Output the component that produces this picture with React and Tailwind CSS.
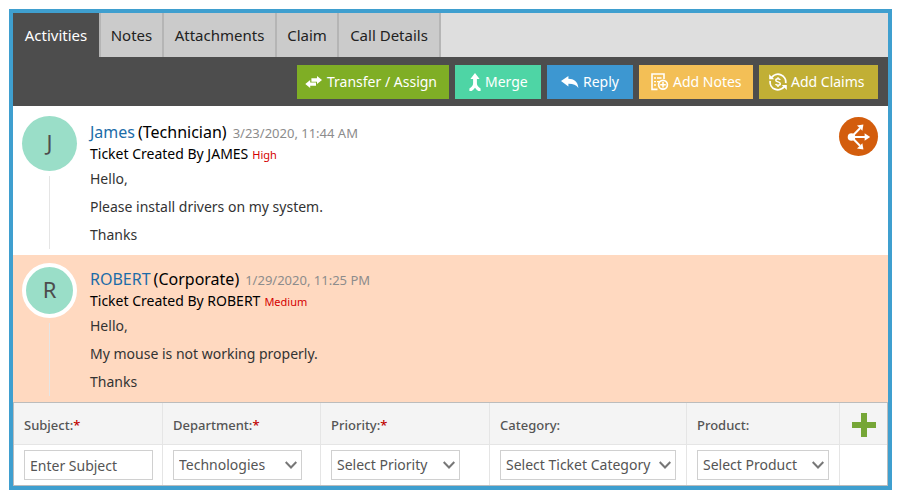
const tabs = [
  { label: 'Activities', width: 'w-[86px]' },
  { label: 'Notes', width: 'w-[63px]' },
  { label: 'Attachments', width: 'w-[113px]' },
  { label: 'Claim', width: 'w-[62px]' },
  { label: 'Call Details', width: 'w-[104px]' },
];

const tickets = [
  {
    name: 'James',
    role: '(Technician)',
    date: '3/23/2020, 11:44 AM',
    created: 'Ticket Created By JAMES',
    priority: 'High',
    message: 'Please install drivers on my system.',
  },
  {
    name: 'ROBERT',
    role: '(Corporate)',
    date: '1/29/2020, 11:25 PM',
    created: 'Ticket Created By ROBERT',
    priority: 'Medium',
    message: 'My mouse is not working properly.',
    highlighted: true,
  },
];

const columns = [
  { id: 'subject', label: 'Subject:', required: true, col: 'w-[149px]', field: 'w-[129px]', text: 'Enter Subject', input: true },
  { id: 'department', label: 'Department:', required: true, col: 'w-[158px]', field: 'w-[129px]', text: 'Technologies' },
  { id: 'priority', label: 'Priority:', required: true, col: 'w-[169px]', field: 'w-[129px]', text: 'Select Priority' },
  { id: 'category', label: 'Category:', col: 'w-[197px]', field: 'w-[176px]', text: 'Select Ticket Category' },
  { id: 'product', label: 'Product:', col: 'w-[153px]', field: 'w-[132px]', text: 'Select Product' },
];

function TransferIcon() {
  return (
    <svg className="h-3 w-[18px] shrink-0" viewBox="0 0 18 12" fill="currentColor" aria-hidden="true">
      <path d="M12 0L17 4L12 8V5.8H6.4V2.2H12Z" />
      <path d="M5.2 4L0.3 8L5.2 12V9.8H11V6.6H5.2Z" />
    </svg>
  );
}

function MergeIcon() {
  return (
    <svg className="h-[18px] w-3 shrink-0" viewBox="0 0 12 18" fill="currentColor" aria-hidden="true">
      <path d="M6 0L10.6 6H7.9V10.2C7.9 12.4 9 13.9 11.6 15.4V18H9.4C7.8 17 6.8 16 6 14.8C5.2 16 4.2 17 2.6 18H0.4V15.4C3 13.9 4.1 12.4 4.1 10.2V6H1.4Z" />
    </svg>
  );
}

function ReplyIcon() {
  return (
    <svg className="h-3 w-[18px] shrink-0" viewBox="0 0 18 12" fill="currentColor" aria-hidden="true">
      <path d="M0 5L7.4 0V2.8C13 2.9 16.8 5.6 17.4 12C15.2 8.8 12 7.6 7.4 7.7V10.4Z" />
    </svg>
  );
}

function NotesIcon() {
  return (
    <svg className="h-[18px] w-[18px] shrink-0" viewBox="0 0 18 18" fill="none" stroke="currentColor" aria-hidden="true">
      <path d="M13 6V1H1V16.4H6.5" strokeWidth="1.6" />
      <path d="M3 5H5M6 5H10.5M3 8.6H5M6 8.6H8.5M3 12H5" strokeWidth="1.3" />
      <circle cx="12" cy="11.8" r="4.4" strokeWidth="1.7" />
      <path d="M12 9V14.6M9.2 11.8H14.8" strokeWidth="1.5" />
    </svg>
  );
}

function ClaimsIcon() {
  return (
    <svg className="h-[18px] w-[18px] shrink-0" viewBox="0 0 18 18" fill="none" stroke="currentColor" aria-hidden="true">
      <path d="M2.6 4.6A7.8 7.8 0 0 1 16.7 10.2M15.2 13.6A7.8 7.8 0 0 1 1.2 7.8" strokeWidth="1.8" />
      <path d="M0.2 1.2V6.2H5.2ZM17.8 17V12H12.8Z" fill="currentColor" stroke="none" />
      <path d="M11.2 6.9C10.9 6.1 10.1 5.8 9 5.8C7.6 5.8 6.8 6.4 6.8 7.2C6.8 9.4 11.3 8.4 11.3 10.8C11.3 11.8 10.4 12.3 9 12.3C7.8 12.3 6.9 11.9 6.6 11M9 4.2V6M9 12.2V13.9" strokeWidth="1.5" />
    </svg>
  );
}

function ShareIcon() {
  return (
    <svg className="h-[28px] w-[24px]" viewBox="0 0 24 28" aria-hidden="true">
      <g stroke="white" strokeWidth="2" fill="none">
        <path d="M4.5 14L13 5.2M4.5 14H19M4.5 14L13 22.8" />
      </g>
      <g fill="white">
        <circle cx="4.5" cy="14" r="3.8" />
        <path d="M16.4 1.4L15.4 7.8L10 2.6Z" />
        <path d="M23.2 14L17.6 10.2V17.8Z" />
        <path d="M16.4 26.6L15.4 20.2L10 25.4Z" />
      </g>
    </svg>
  );
}

const actions = [
  { label: 'Transfer / Assign', Icon: TransferIcon, style: 'w-[152px] pl-2 bg-[#7fae25]' },
  { label: 'Merge', Icon: MergeIcon, style: 'w-[86px] pl-3.5 bg-[#4ed5a5]' },
  { label: 'Reply', Icon: ReplyIcon, style: 'w-[86px] pl-3.5 bg-[#3d97d1]' },
  { label: 'Add Notes', Icon: NotesIcon, style: 'w-[114px] pl-3 bg-[#f3bf56]' },
  { label: 'Add Claims', Icon: ClaimsIcon, style: 'w-[119px] pl-2.5 bg-[#c1af35]' },
];

function Ticket({ ticket }) {
  const on = ticket.highlighted;
  return (
    <article className={`flex pr-2.5 pl-[9px] pb-1.5 ${on ? 'bg-[#ffd9c0] pt-2' : 'bg-white pt-2.5'}`}>
      <div className="mr-[13px] flex w-[55px] shrink-0 flex-col items-center">
        <div
          className={`flex h-[55px] w-[55px] items-center justify-center rounded-full bg-[#9adec8] pb-1 text-[22px] leading-7 text-[#4d4d4d] ${on ? 'border-4 border-white' : ''}`}
        >
          {ticket.name[0]}
        </div>
        <div className="mt-[5px] w-px flex-1 bg-[#e5e5e5]" />
      </div>
      <div className="min-w-0 flex-1 pt-[5px]">
        <h2 className="flex h-[22px] items-baseline text-[16px] leading-[22px] text-black">
          <a href="#profile" className="text-[#1c6ca8]">{ticket.name}</a>
          <span className="ml-[3px]">{ticket.role}</span>
          <time className="ml-1.5 text-[13px] leading-5 text-[#8c8c8c]">{ticket.date}</time>
        </h2>
        <p className="flex h-[22px] items-baseline text-[14px] leading-[22px] text-black">
          {ticket.created}
          <span className="ml-1 text-[11px] leading-4 text-[#d40000]">{ticket.priority}</span>
        </p>
        <div className="text-[14px] leading-7 text-[#333]">
          <p>Hello,</p>
          <p>{ticket.message}</p>
          <p>Thanks</p>
        </div>
      </div>
      {!on && (
        <button type="button" aria-label="Share" className="mt-px flex h-[39px] w-[39px] shrink-0 items-center justify-center rounded-full bg-[#d35d0d]">
          <ShareIcon />
        </button>
      )}
    </article>
  );
}

function Field({ column }) {
  const box = 'h-[30px] w-full border border-[#d0d0d0] bg-white pl-[5px] text-[14px] leading-5 text-[#555]';
  if (column.input) {
    return (
      <input id={column.id} type="text" placeholder={column.text} className={`block placeholder:text-[#555] ${box}`} />
    );
  }
  return (
    <div className="relative">
      <select id={column.id} className={`block appearance-none rounded-none pr-5 ${box}`}>
        <option>{column.text}</option>
      </select>
      <svg className="pointer-events-none absolute top-[11px] right-[5px] h-2 w-3" viewBox="0 0 12 8" fill="none" stroke="#777" strokeWidth="2" aria-hidden="true">
        <path d="M0.7 1L6 6.5L11.3 1" />
      </svg>
    </div>
  );
}

export default function App() {
  return (
    <div className="bg-white py-[9px] pr-2 pl-[9px] font-['Noto_Sans',sans-serif]">
      <main className="border-4 border-[#3f9fcf]">
        <nav className="flex bg-[#dedede]">
          {tabs.map((tab, i) => (
            <button
              key={tab.label}
              type="button"
              className={`h-11 border-[#b5b5b5] text-[15px] leading-6 whitespace-nowrap ${tab.width} ${i === 0 ? 'bg-[#4d4d4d] text-white' : 'bg-[#cbcbcb] text-[#222] border-l-2'} ${i === tabs.length - 1 ? 'border-r-2' : ''}`}
            >
              {tab.label}
            </button>
          ))}
        </nav>
        <div className="flex justify-end gap-1.5 bg-[#4d4d4d] pt-2 pr-2.5 pb-[7px]">
          {actions.map(({ label, Icon, style }) => (
            <button key={label} type="button" className={`flex h-[34px] items-center gap-1 text-[14px] leading-5 whitespace-nowrap text-white ${style}`}>
              <Icon />
              {label}
            </button>
          ))}
        </div>
        {tickets.map((ticket) => (
          <Ticket key={ticket.name} ticket={ticket} />
        ))}
        <table className="w-full table-fixed border-separate border-spacing-0 border border-[#bcbcbc] text-left">
          <thead>
            <tr className="bg-[#f4f4f4]">
              {columns.map((column) => (
                <th key={column.id} className={`h-[42px] border-r border-b border-[#e5e5e5] pt-0.5 pl-2.5 text-[13px] leading-5 font-medium text-[#555] ${column.col}`}>
                  <label htmlFor={column.id}>
                    {column.label}
                    {column.required && <span className="text-[#c00000]">*</span>}
                  </label>
                </th>
              ))}
              <th className="w-[47px] border-b border-[#e5e5e5] pt-0.5">
                <button type="button" aria-label="Add field" className="mx-auto block h-6 w-6 text-[#76a637]">
                  <svg viewBox="0 0 24 24" fill="currentColor" aria-hidden="true">
                    <path d="M9 0H15V9H24V15H15V24H9V15H0V9H9Z" />
                  </svg>
                </button>
              </th>
            </tr>
          </thead>
          <tbody>
            <tr>
              {columns.map((column) => (
                <td key={column.id} className="border-r border-[#e5e5e5] pt-[5px] pb-[5px] pl-2.5">
                  <div className={column.field}>
                    <Field column={column} />
                  </div>
                </td>
              ))}
              <td />
            </tr>
          </tbody>
        </table>
      </main>
    </div>
  );
}
